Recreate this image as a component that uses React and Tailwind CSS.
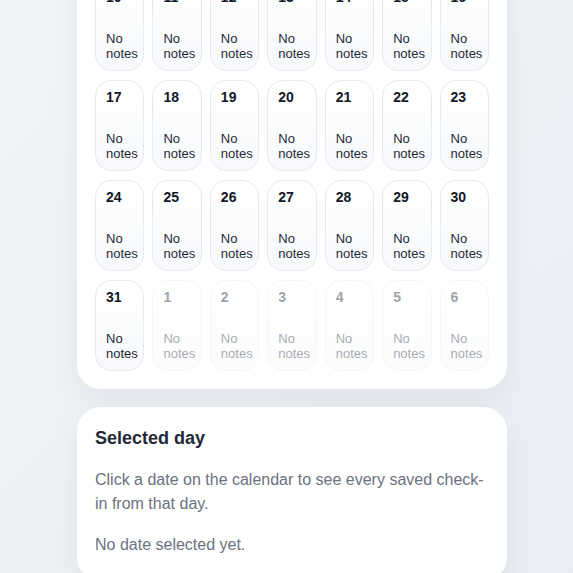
const rows = [
  [10, 11, 12, 13, 14, 15, 16],
  [17, 18, 19, 20, 21, 22, 23],
  [24, 25, 26, 27, 28, 29, 30],
  [31, 1, 2, 3, 4, 5, 6],
];

function DayCell({ day, faded }) {
  return (
    <div
      className={`h-[91px] flex flex-col justify-between pt-[7px] pb-[9px] px-[10px] rounded-[16px] border border-[#e6e9ef] bg-gradient-to-b from-white to-[#f7f9fc] ${
        faded ? 'opacity-40' : ''
      }`}
    >
      <span className="text-[14px] leading-[18px] font-bold text-[#111827]">{day}</span>
      <span className="text-[13px] leading-[15px] text-[#1f2937]">
        No
        <br />
        notes
      </span>
    </div>
  );
}

export default function App() {
  return (
    <div
      className="min-h-[573px] h-[573px] overflow-hidden bg-gradient-to-br from-[#f1f4f8] to-[#eaeef4]"
      style={{ fontFamily: '"Liberation Sans", Arial, sans-serif' }}
    >
      <div className="ml-[77px] w-[430px] -mt-[38px] flex flex-col gap-[18px]">
        <div className="bg-white rounded-[24px] shadow-[0_10px_30px_rgba(15,23,42,0.06)] px-[18px] pt-[18px] pb-[18px]">
          <div className="grid grid-cols-7 gap-x-[8px] gap-y-[9px]">
            {rows.map((row, ri) =>
              row.map((d) => (
                <DayCell key={`${ri}-${d}`} day={d} faded={ri === 3 && d !== 31} />
              ))
            )}
          </div>
        </div>

        <div className="bg-white rounded-[24px] shadow-[0_10px_30px_rgba(15,23,42,0.06)] px-[18px] pt-[19px] pb-[24px]">
          <h2 className="text-[18px] leading-[24px] font-bold text-[#1f2937]">Selected day</h2>
          <p className="mt-[18px] text-[16px] leading-[24px] text-[#6b7280]">
            Click a date on the calendar to see every saved check-in from that day.
          </p>
          <p className="mt-[17px] text-[16px] leading-[24px] text-[#6b7280]">No date selected yet.</p>
        </div>
      </div>
    </div>
  );
}
